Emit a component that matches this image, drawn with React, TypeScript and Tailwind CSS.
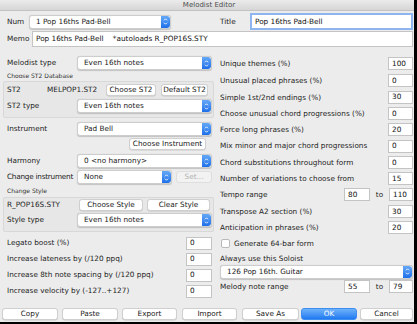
import React from 'react';

const Stepper = () => (
  <div className="w-[9px] h-full rounded-r-[3px] bg-linear-to-b from-[#63a8f8] to-[#1d6fe9] flex items-center justify-center shrink-0">
    <svg width="5" height="9" viewBox="0 0 5 9">
      <path d="M1 3.3 L2.5 1.8 L4 3.3 M1 5.7 L2.5 7.2 L4 5.7" stroke="white" strokeWidth="0.9" fill="none" />
    </svg>
  </div>
);

const Select = ({ text, className = '' }: { text: string; className?: string }) => (
  <div className={'h-[14px] bg-white rounded-[3px] border border-[#cdcdcd] shadow-[0_0.5px_1px_rgba(0,0,0,0.18)] flex items-center overflow-hidden ' + className}>
    <span className="flex-1 pl-[6px] whitespace-pre text-[#1a1a1a]">{text}</span>
    <Stepper />
  </div>
);

const Input = ({ v, className = '' }: { v: string; className?: string }) => (
  <div className={'h-[13px] bg-white border border-[#c4c4c4] flex items-center pl-[3px] text-[#111] shrink-0 ' + className}>{v}</div>
);

const Btn = ({ t, className = '' }: { t: string; className?: string }) => (
  <div className={'h-[12px] bg-white rounded-[3px] border border-[#cfcfcf] shadow-[0_0.5px_0.5px_rgba(0,0,0,0.15)] flex items-center justify-center shrink-0 text-[#1a1a1a] ' + className}>{t}</div>
);

const RightRow = ({ label, v, h = 'h-[16.3px]' }: { label: string; v: string; h?: string }) => (
  <div className={h + ' flex items-center'}>
    <span className="flex-1">{label}</span>
    <Input v={v} className="w-[25px]" />
  </div>
);

const LeftNumRow = ({ label, v }: { label: string; v: string }) => (
  <div className="h-[16px] flex items-center pl-[7px] pr-[2px]">
    <span className="flex-1">{label}</span>
    <Input v={v} className="w-[26px]" />
  </div>
);

export default function App() {
  return (
    <div className="w-[417px] h-[324px] bg-[#ececec] flex flex-col overflow-hidden border-r-[3px] border-b-[2px] border-black text-[7.3px] leading-none text-[#1e1e1e] font-['DejaVu_Sans',sans-serif]">
      {/* title bar */}
      <div className="h-[11px] shrink-0 bg-linear-to-b from-[#ebebeb] to-[#d6d6d6] border-b border-[#c2c2c2] flex items-center justify-center text-[#4d4d4d] text-[7px] pl-[4px]">
        Melodist Editor
      </div>

      {/* Num / Title */}
      <div className="mt-[2px] h-[17px] flex items-center">
        <span className="pl-[7px] w-[29px] shrink-0">Num</span>
        <Select text="1 Pop 16ths Pad-Bell" className="w-[142px] shrink-0" />
        <span className="ml-[49px] w-[30px] shrink-0">Title</span>
        <div className="flex-1 mr-[1px] h-[17px] bg-white border-2 border-[#8fb5f0] flex items-center pl-[3px] text-[#111]">
          Pop 16ths Pad-Bell
        </div>
      </div>

      {/* Memo */}
      <div className="mt-[1px] h-[16px] flex items-center">
        <span className="pl-[7px] w-[32px] shrink-0">Memo</span>
        <div className="flex-1 mr-[1px] h-[16px] bg-white border border-[#c4c4c4] flex items-center pl-[3px] text-[#111] whitespace-pre">
          Pop 16ths Pad-Bell    *autoloads R_POP16S.STY
        </div>
      </div>

      {/* body */}
      <div className="mt-[8px] flex">
        {/* left column */}
        <div className="w-[214px] shrink-0 flex flex-col">
          <div className="h-[16px] flex items-center pl-[7px]">
            <span className="w-[70px] shrink-0">Melodist type</span>
            <Select text="Even 16th notes" className="w-[135px]" />
          </div>
          <div className="h-[10px] flex items-center pl-[7px] text-[6px] text-[#333]">Choose ST2 Database</div>
          <div className="ml-[3px] w-[211px] border border-[#d8d8d8] bg-[#e7e7e7] rounded-[2px] pb-[3px]">
            <div className="h-[16px] flex items-center pl-[3px]">
              <span className="w-[40px] shrink-0">ST2</span>
              <span className="w-[59px] shrink-0">MELPOP1.ST2</span>
              <Btn t="Choose ST2" className="w-[50px]" />
              <Btn t="Default ST2" className="w-[47px] ml-[5px]" />
            </div>
            <div className="h-[16px] flex items-center pl-[3px]">
              <span className="w-[70px] shrink-0">ST2 type</span>
              <Select text="Even 16th notes" className="w-[135px]" />
            </div>
          </div>

          <div className="mt-[3px] h-[16px] flex items-center pl-[7px]">
            <span className="w-[70px] shrink-0">Instrument</span>
            <Select text="Pad Bell" className="w-[135px]" />
          </div>
          <div className="h-[14px] flex items-center pl-[129px]">
            <Btn t="Choose Instrument" className="w-[77px]" />
          </div>
          <div className="mt-[2px] h-[16px] flex items-center pl-[7px]">
            <span className="w-[70px] shrink-0">Harmony</span>
            <Select text="0 <no harmony>" className="w-[135px]" />
          </div>
          <div className="h-[16px] flex items-center pl-[7px]">
            <span className="w-[70px] shrink-0 whitespace-nowrap tracking-[-0.25px]">Change instrument</span>
            <Select text="None" className="w-[95px]" />
            <div className="ml-[4px] w-[36px] h-[12px] rounded-[3px] border border-[#dedede] bg-[#f2f2f2] flex items-center justify-center text-[#b2b2b2]">Set...</div>
          </div>
          <div className="h-[12px] flex items-center pl-[7px] text-[6px] text-[#333]">Change Style</div>
          <div className="ml-[3px] w-[211px] border border-[#d8d8d8] bg-[#e7e7e7] rounded-[2px] pb-[3px]">
            <div className="h-[14px] flex items-center pl-[3px]">
              <span className="w-[72px] shrink-0">R_POP16S.STY</span>
              <Btn t="Choose Style" className="w-[64px]" />
              <Btn t="Clear Style" className="w-[63px] ml-[4px]" />
            </div>
            <div className="h-[16px] flex items-center pl-[3px]">
              <span className="w-[70px] shrink-0">Style type</span>
              <Select text="Even 16th notes" className="w-[135px]" />
            </div>
          </div>

          <div className="mt-[3px]">
            <LeftNumRow label="Legato boost (%)" v="0" />
            <LeftNumRow label="Increase lateness by (/120 ppq)" v="0" />
            <LeftNumRow label="Increase 8th note spacing by (/120 ppq)" v="0" />
            <LeftNumRow label="Increase velocity by (-127..+127)" v="0" />
          </div>
        </div>

        {/* right column */}
        <div className="ml-[6px] w-[193px] shrink-0 flex flex-col">
          <RightRow label="Unique themes (%)" v="100" h="h-[17px]" />
          <RightRow label="Unusual placed phrases (%)" v="0" h="h-[17px]" />
          <RightRow label="Simple 1st/2nd endings (%)" v="30" />
          <RightRow label="Choose unusual chord progressions (%)" v="0" />
          <RightRow label="Force long phrases (%)" v="20" />
          <RightRow label="Mix minor and major chord progressions" v="0" />
          <RightRow label="Chord substitutions throughout form" v="0" />
          <RightRow label="Number of variations to choose from" v="15" />
          <div className="h-[16.3px] flex items-center">
            <span className="flex-1">Tempo range</span>
            <Input v="80" className="w-[26px]" />
            <span className="w-[19px] text-center">to</span>
            <Input v="110" className="w-[24px]" />
          </div>
          <RightRow label="Transpose A2 section (%)" v="30" />
          <RightRow label="Anticipation in phrases (%)" v="20" h="h-[16px]" />
          <div className="h-[16px] flex items-center pl-[1px]">
            <div className="w-[9px] h-[9px] bg-white border border-[#b9b9b9] rounded-[2px] shrink-0" />
            <span className="ml-[4px]">Generate 64-bar form</span>
          </div>
          <div className="h-[14px] flex items-center">Always use this Soloist</div>
          <div className="h-[13px] flex items-center">
            <Select text="126 Pop 16th. Guitar" className="w-full h-[12px]" />
          </div>
          <div className="h-[16px] flex items-center">
            <span className="flex-1">Melody note range</span>
            <Input v="55" className="w-[26px]" />
            <span className="w-[19px] text-center">to</span>
            <Input v="79" className="w-[24px]" />
          </div>
        </div>
      </div>

      {/* bottom buttons */}
      <div className="mt-auto mb-[2px] h-[12px] flex">
        <Btn t="Copy" className="ml-[2px] w-[56px]" />
        <Btn t="Paste" className="ml-[4px] w-[56px]" />
        <Btn t="Export" className="ml-[4px] w-[55px]" />
        <Btn t="Import" className="ml-[5px] w-[55px]" />
        <Btn t="Save As" className="ml-[5px] w-[57px]" />
        <div className="ml-[2px] w-[56px] h-[12px] rounded-[3px] bg-linear-to-b from-[#6db1fa] to-[#1c79f0] border border-[#3e8ef2] flex items-center justify-center text-white">OK</div>
        <Btn t="Cancel" className="ml-[3px] w-[53px]" />
      </div>
    </div>
  );
}
